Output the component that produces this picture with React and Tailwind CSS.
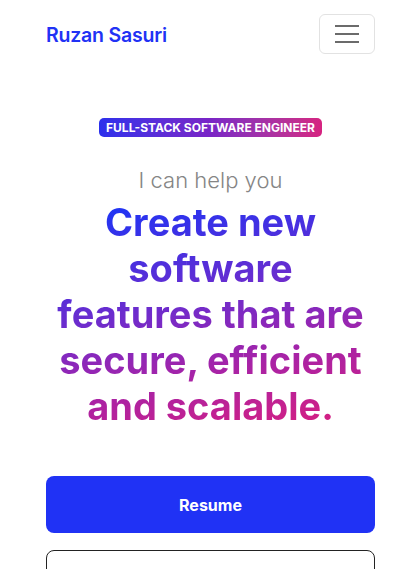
export default function App() {
  return (
    <div className="min-h-[569px] bg-white font-['Inter',sans-serif] overflow-hidden">
      <header className="flex items-center justify-between pl-[46px] pr-[38px] pt-[14px]">
        <span className="text-[19.5px] font-semibold text-[#2132f5] tracking-[-0.2px] mt-[3px]">Ruzan Sasuri</span>
        <button className="w-[56px] h-[40px] border border-[#e2e2e2] rounded-[6px] flex flex-col items-center justify-center gap-[6px]">
          <span className="block w-[24px] h-[2px] bg-[#6b6b6b]"></span>
          <span className="block w-[24px] h-[2px] bg-[#6b6b6b]"></span>
          <span className="block w-[24px] h-[2px] bg-[#6b6b6b]"></span>
        </button>
      </header>
      <main className="pl-[46px] pr-[38px] pt-[64px] flex flex-col items-center">
        <div className="h-[19px] px-[7px] rounded-[5px] bg-linear-to-r from-[#2a2fec] via-[#7a24c6] to-[#d62380] flex items-center">
          <span className="text-[12px] font-bold text-white uppercase tracking-[0px] leading-none">Full-Stack Software Engineer</span>
        </div>
        <p className="mt-[31px] text-[22px] font-light text-[#858585] leading-[24px] tracking-[0px]">I can help you</p>
        <h1 className="mt-[7px] text-center text-[38px] font-bold leading-[46px] tracking-[0px] bg-[linear-gradient(168deg,#1c34f6_5%,#6f2ccc_45%,#a823a6_70%,#dc1f7c_100%)] bg-clip-text text-transparent">
          Create new<br />software<br />features that are<br />secure, efficient<br />and scalable.
        </h1>
        <button className="mt-[47px] w-full h-[57px] rounded-[8px] bg-[#2032f5] text-white text-[16px] font-bold">Resume</button>
        <button className="mt-[17px] w-full h-[57px] rounded-[8px] border border-[#222] bg-white"></button>
      </main>
    </div>
  );
}
